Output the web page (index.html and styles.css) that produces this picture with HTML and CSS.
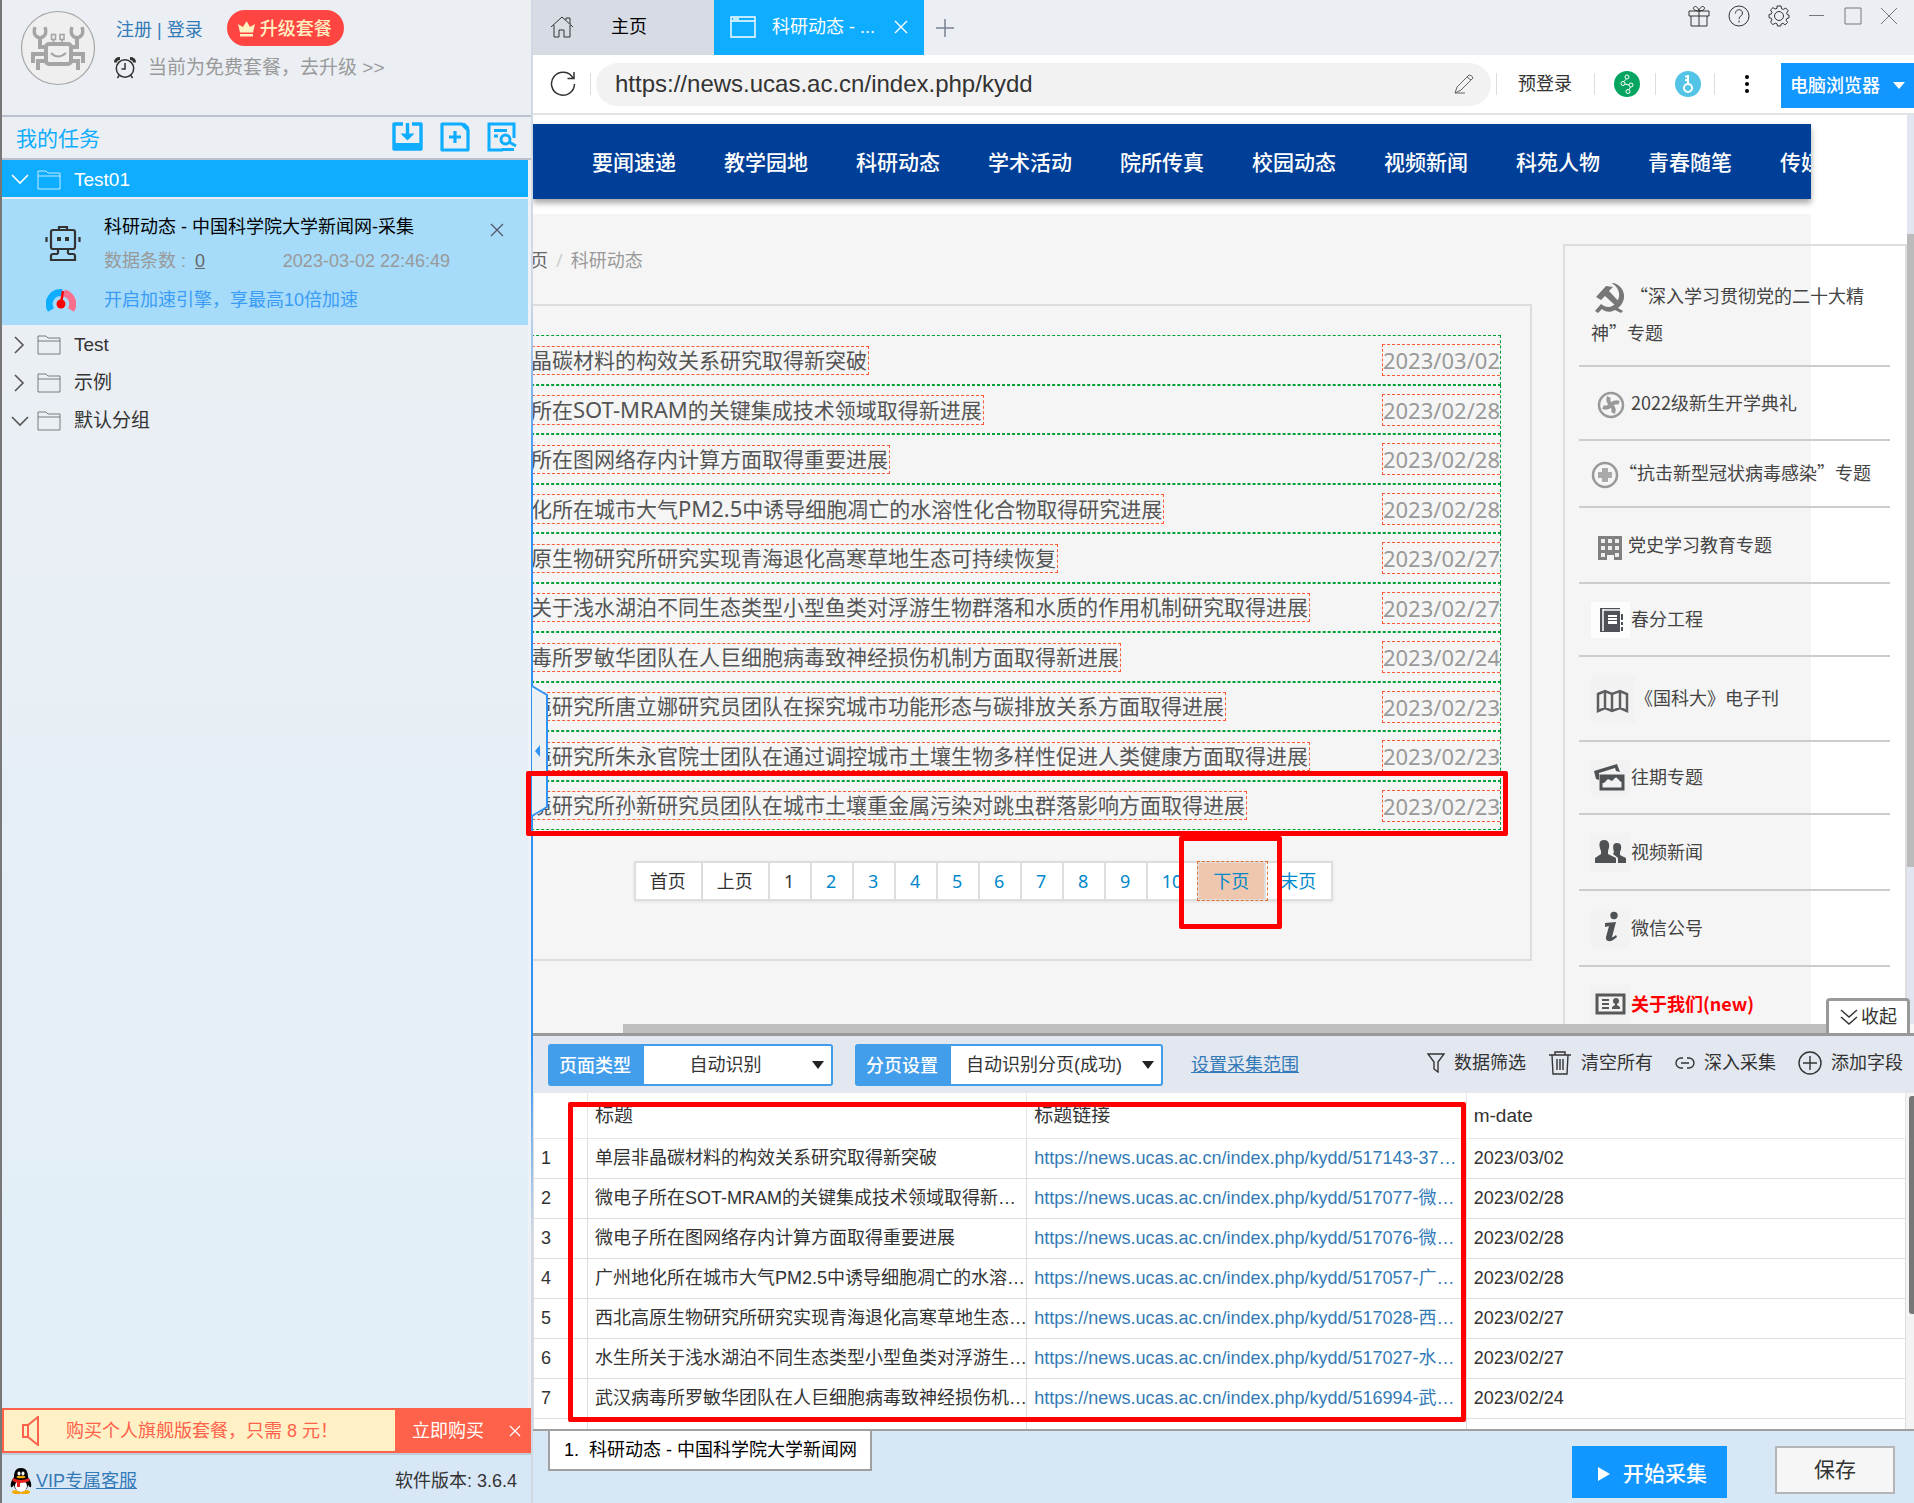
FILE: index.html
```html
<!DOCTYPE html>
<html lang="zh-CN">
<head>
<meta charset="utf-8">
<title>科研动态 - 中国科学院大学新闻网-采集</title>
<link rel="stylesheet" href="styles.css">
</head>
<body>
<div class="app">
  <aside class="sidebar">
    <header class="account">
      <svg class="avatar" viewBox="0 0 76 76" width="76" height="76" fill="none" stroke="#a5a5a5" stroke-width="4">
        <circle cx="38" cy="38" r="36.5" fill="#efefef" stroke-width="1.2"/>
        <rect x="26" y="34" width="25" height="20" rx="3"/>
        <path d="M31 43q7 7 15 0" stroke-width="2"/>
        <path d="M26 37h-6v-9M51 37h6v-9" />
        <path d="M15 17q-3 9 5 11q8-2 5-11M52 17q-3 9 5 11q8-2 5-11" stroke-width="3.4"/>
        <path d="M26 44H13v9M26 51h-8v9M51 44h12v9M51 51h7v9"/>
        <rect x="31.500" y="24.500" width="4" height="5" stroke-width="1.600"/><rect x="40" y="24.500" width="4" height="5" stroke-width="1.600"/><path d="M33.500 30v4M42 30v4" stroke-width="1.600"/>
      </svg>
      <div class="account-info">
        <div class="account-line">
          <span class="login"><a href="#">注册</a> | <a href="#">登录</a></span>
          <button class="upgrade" type="button">
            <svg width="19" height="16" viewBox="0 0 19 16" fill="#fff0c2"><path d="M9.500 0l3.500 6 5-3-2 8.500H3L1 3l5 3zM3 13h13v2.500H3z"/></svg>升级套餐</button>
        </div>
        <a class="plan" href="#">
          <svg width="22" height="24" viewBox="0 0 22 24" fill="none" stroke="#333" stroke-width="1.500"><circle cx="11" cy="12.500" r="8.700"/><path d="M11 7v6H7.500M5 19.500L3.500 22M17 19.500l1.500 2.500"/><path d="M1.500 6.500q0-4 4.500-4M20.500 6.500q0-4-4.500-4" stroke-width="3"/></svg>
          <span>当前为免费套餐，去升级 &gt;&gt;</span></a>
      </div>
    </header>
    <div class="tasks-head">
      <h2>我的任务</h2>
      <div class="task-tools">
        <button type="button" aria-label="导入任务"><svg width="31" height="30" viewBox="0 0 31 30" fill="none" stroke="#0fadff" stroke-width="3.400"><path d="M11 2H2v25h27V2h-9" stroke-linejoin="round"/><path d="M2 24.500h27" stroke-width="7"/><path d="M15.500 1v13"/><path d="M8.500 11.500h14l-7 7z" fill="#0fadff" stroke="none"/></svg></button>
        <button type="button" aria-label="新建任务"><svg width="30" height="30" viewBox="0 0 30 30" fill="none" stroke="#0fadff" stroke-width="3.200"><path d="M2 2h20l6 6v20H2z" stroke-linejoin="round"/><path d="M15 9v12M9 15h12"/><path d="M20 1l9 9V5l-4-4z" fill="#0fadff" stroke="none"/></svg></button>
        <button type="button" aria-label="查找任务"><svg width="30" height="30" viewBox="0 0 30 30" fill="none" stroke="#0fadff" stroke-width="3"><path d="M16 28H2V2h25v14"/><path d="M7 8.500h13M7 14h4"/><circle cx="18.500" cy="17.500" r="4.500"/><path d="M22 20l7 4M15 27.500h12"/></svg></button>
      </div>
    </div>
    <nav class="tree">
      <a class="folder active" href="#"><svg class="chev" width="18" height="11" viewBox="0 0 18 11"><path d="M1 1l8 8 8-8"/></svg><svg class="dir" width="24" height="20" viewBox="0 0 24 20"><path d="M1 19V1h8l2 2h12v16zM1 6h22"/></svg>Test01</a>
      <article class="task">
        <svg class="robot" width="36" height="38" viewBox="0 0 36 38" fill="none" stroke="#333" stroke-width="2.200"><rect x="6" y="5" width="24" height="19" rx="2"/><path d="M14 5V2h8v3M1.500 12v5M34.500 12v5M13 24v5M23 24v5M8 29h5M23 29h5"/><path d="M8 29q-2 0-2 2v4h24v-4q0-2-2-2"/><path d="M12 14h4M20 14h4" stroke-width="4"/></svg>
        <div class="task-name">科研动态 - 中国科学院大学新闻网-采集</div>
        <button class="task-close" type="button" aria-label="删除任务"><svg width="14" height="14" viewBox="0 0 14 14"><path d="M1 1l12 12M13 1L1 13"/></svg></button>
        <div class="task-meta"><span>数据条数 : <u>0</u></span><time>2023-03-02 22:46:49</time></div>
        <svg class="gauge" width="30" height="24" viewBox="0 0 30 24" fill="none" stroke-width="7"><path d="M5 22A11.500 11.500 0 0 1 16 4.500" stroke="#0fadff"/><path d="M18 4.800A11.500 11.500 0 0 1 25 22" stroke="#fb6f8e"/><circle cx="15" cy="16" r="4.500" fill="red" stroke="none"/><path d="M15 16L17 3" stroke="red" stroke-width="2.500"/></svg>
        <a class="boost" href="#">开启加速引擎，享最高10倍加速</a>
      </article>
      <a class="folder" href="#"><svg class="chev side" width="18" height="18" viewBox="0 0 18 18"><path d="M4 1l8 8-8 8"/></svg><svg class="dir" width="24" height="20" viewBox="0 0 24 20"><path d="M1 19V1h8l2 2h12v16zM1 6h22"/></svg>Test</a>
      <a class="folder" href="#"><svg class="chev side" width="18" height="18" viewBox="0 0 18 18"><path d="M4 1l8 8-8 8"/></svg><svg class="dir" width="24" height="20" viewBox="0 0 24 20"><path d="M1 19V1h8l2 2h12v16zM1 6h22"/></svg>示例</a>
      <a class="folder" href="#"><svg class="chev" width="18" height="11" viewBox="0 0 18 11"><path d="M1 1l8 8 8-8"/></svg><svg class="dir" width="24" height="20" viewBox="0 0 24 20"><path d="M1 19V1h8l2 2h12v16zM1 6h22"/></svg>默认分组</a>
    </nav>
    <div class="promo">
      <svg width="20" height="30" viewBox="0 0 20 30" fill="none" stroke="#ff624a" stroke-width="2"><path d="M1 9h5v12H1zM6 9l10-8v28L6 21"/></svg>
      <p>购买个人旗舰版套餐，只需 8 元！</p>
      <button class="buy" type="button">立即购买</button>
      <button class="promo-close" type="button" aria-label="关闭"><svg width="12" height="12" viewBox="0 0 12 12"><path d="M1 1l10 10M11 1L1 11"/></svg></button>
    </div>
    <footer class="side-foot">
      <svg width="22" height="26" viewBox="0 0 22 26"><ellipse cx="7" cy="24" rx="5" ry="2" fill="#f5a800"/><ellipse cx="15" cy="24" rx="5" ry="2" fill="#f5a800"/><path d="M11 0C5 0 4 5 4 9c-2 3-4 6-3 10 1 1 2-1 3-2 1 9 13 9 14 0 1 1 2 3 3 2 1-4-1-7-3-10 0-4-1-9-7-9z" fill="#000"/><ellipse cx="11" cy="18" rx="6" ry="6" fill="#fff"/><path d="M3 10q8 4 16 0l.5 3q-4 2-9.500 2v4H7v-4.500Q4 14 2.500 13z" fill="#e8221c"/><ellipse cx="9" cy="5.500" rx="1.500" ry="2" fill="#fff"/><ellipse cx="13" cy="5.500" rx="1.500" ry="2" fill="#fff"/><ellipse cx="11" cy="9" rx="4.500" ry="1.300" fill="#f5a800"/></svg>
      <a href="#">VIP专属客服</a>
      <span>软件版本: 3.6.4</span>
    </footer>
  </aside>

  <main class="main">
    <div class="tabbar">
      <button class="tab home" type="button"><svg width="24" height="24" viewBox="0 0 24 24"><path d="M1 12L12 2l11 10M4 10v12h5v-7h5v7h6V10M16 5V3h4v6"/></svg><span>主页</span></button>
      <button class="tab current" type="button"><svg width="26" height="22" viewBox="0 0 26 22"><path d="M1 1h24v20H1zM1 5h24M3 3h6"/></svg><span>科研动态 - ...</span><svg class="tab-x" width="14" height="14" viewBox="0 0 14 14"><path d="M1 1l12 12M13 1L1 13"/></svg></button>
      <button class="newtab" type="button" aria-label="新标签"><svg width="18" height="18" viewBox="0 0 18 18"><path d="M9 0v18M0 9h18"/></svg></button>
      <div class="winctl">
        <button type="button" aria-label="礼物"><svg width="22" height="22" viewBox="0 0 22 22"><path d="M1 6h20v5H1zM3 11v10h16V11M11 6v15M11 6C7 6 4 4 6 2s5 2 5 4c0-2 3-6 5-4s-1 4-5 4"/></svg></button>
        <button type="button" aria-label="帮助"><svg width="22" height="22" viewBox="0 0 22 22"><circle cx="11" cy="11" r="10"/><path d="M7.500 8.500c0-5 7-5 7-.5 0 3-3.500 3-3.500 6M11 15.500v2"/></svg></button>
        <button type="button" aria-label="设置"><svg width="22" height="22" viewBox="0 0 22 22"><circle cx="11" cy="11" r="4.500"/><path d="M9 1h4l.6 2.800 1.600.7L17.700 3l2.500 2.700-1.600 2.400.6 1.500L21 10v3l-2.200.5-.7 1.700 1.500 2.300-2.400 2.300-2.300-1.500-1.700.7L12.700 21H9.500L9 18.800l-1.700-.7L5 19.600l-2.500-2.400L4 15l-.7-1.700L1 12.700V9.500L3.300 9 4 7.300 2.500 5 5 2.600 7.200 4 9 3.300z"/></svg></button>
        <button type="button" aria-label="最小化"><svg width="18" height="22" viewBox="0 0 18 22"><path class="grey" d="M1 10.500h15"/></svg></button>
        <button type="button" aria-label="最大化"><svg width="18" height="22" viewBox="0 0 18 22"><path class="grey" d="M1 3h16v16H1z"/></svg></button>
        <button type="button" aria-label="关闭"><svg width="18" height="22" viewBox="0 0 18 22"><path class="grey" d="M1 3l16 16M17 3L1 19"/></svg></button>
      </div>
    </div>

    <div class="addressbar">
      <button class="reload" type="button" aria-label="刷新"><svg width="26" height="26" viewBox="0 0 26 26"><path d="M23 7A11.500 11.500 0 1 0 24.500 13M24 1v6.500h-6.500"/></svg></button>
      <i class="bar"></i>
      <label class="url"><input type="text" aria-label="网址" value="https://news.ucas.ac.cn/index.php/kydd"><svg width="20" height="20" viewBox="0 0 20 20"><path d="M1 19l2-6L15 1q3 0 4 3L7 16zM1 19h10M13 3l4 3"/></svg></label>
      <i class="bar"></i>
      <button class="prelogin" type="button">预登录</button>
      <i class="bar"></i>
      <button class="round" type="button" aria-label="代理"><svg width="26" height="26" viewBox="0 0 26 26" fill="none" stroke="#fff"><circle cx="13" cy="13" r="13" fill="#05a561" stroke="none"/><circle cx="13" cy="6" r="2"/><circle cx="9" cy="12.500" r="2"/><circle cx="17" cy="14" r="2"/><circle cx="14" cy="20.500" r="2"/><path d="M12.500 8L10 10.500M11 13l4 1M16.500 16L15 18.500"/></svg></button>
      <i class="bar"></i>
      <button class="round" type="button" aria-label="密码"><svg width="26" height="26" viewBox="0 0 26 26" fill="none" stroke="#fff" stroke-width="2"><circle cx="13" cy="13" r="13" fill="#54c4e6" stroke="none"/><circle cx="13" cy="17" r="4"/><path d="M13 13V4M10 5.500h3M10 9h3"/></svg></button>
      <i class="bar"></i>
      <button class="more" type="button" aria-label="更多"><svg width="6" height="20" viewBox="0 0 6 20"><circle cx="3" cy="3" r="2"/><circle cx="3" cy="10" r="2"/><circle cx="3" cy="17" r="2"/></svg></button>
      <button class="browser" type="button">电脑浏览器<svg width="12" height="7" viewBox="0 0 12 7"><path d="M0 0h12L6 7z"/></svg></button>
    </div>

    <div class="browserpane">
      <div class="viewport">
        <div class="site">
          <nav class="sitenav"><a href="#">要闻速递</a><a href="#">教学园地</a><a href="#">科研动态</a><a href="#">学术活动</a><a href="#">院所传真</a><a href="#">校园动态</a><a href="#">视频新闻</a><a href="#">科苑人物</a><a href="#">青春随笔</a><a href="#">传媒扫描</a></nav>
          <div class="sitebody">
            <div class="column">
              <div class="crumb"><a href="#">首页</a><i>/</i><span>科研动态</span></div>
              <section class="panel">
                <ul class="news">
                  <li><a href="#">单层非晶碳材料的构效关系研究取得新突破</a><time>2023/03/02</time></li>
                  <li><a href="#">微电子所在<span>SOT-MRAM</span>的关键集成技术领域取得新进展</a><time>2023/02/28</time></li>
                  <li><a href="#">微电子所在图网络存内计算方面取得重要进展</a><time>2023/02/28</time></li>
                  <li><a href="#">广州地化所在城市大气<span>PM2.5</span>中诱导细胞凋亡的水溶性化合物取得研究进展</a><time>2023/02/28</time></li>
                  <li><a href="#">西北高原生物研究所研究实现青海退化高寒草地生态可持续恢复</a><time>2023/02/27</time></li>
                  <li><a href="#">水生所关于浅水湖泊不同生态类型小型鱼类对浮游生物群落和水质的作用机制研究取得进展</a><time>2023/02/27</time></li>
                  <li><a href="#">武汉病毒所罗敏华团队在人巨细胞病毒致神经损伤机制方面取得新进展</a><time>2023/02/24</time></li>
                  <li><a href="#">城市环境研究所唐立娜研究员团队在探究城市功能形态与碳排放关系方面取得进展</a><time>2023/02/23</time></li>
                  <li><a href="#">城市环境研究所朱永官院士团队在通过调控城市土壤生物多样性促进人类健康方面取得进展</a><time>2023/02/23</time></li>
                  <li><a href="#">城市环境研究所孙新研究员团队在城市土壤重金属污染对跳虫群落影响方面取得进展</a><time>2023/02/23</time></li>
                </ul>
                <div class="pager"><span>首页</span><span>上页</span><span>1</span><a href="#">2</a><a href="#">3</a><a href="#">4</a><a href="#">5</a><a href="#">6</a><a href="#">7</a><a href="#">8</a><a href="#">9</a><a href="#">10</a><a class="next" href="#">下页</a><a href="#">末页</a></div>
              </section>
            </div>
            <aside class="topics">
              <ul>
                <li class="long"><svg width="39" height="30" viewBox="0 3 39 30" fill="#777"><path d="M5 17l10-11 7 1-4 4 12 13-4 3-12-11-4 4zM19 2c16 3 18 18 8 26l5 3-2 2-6-3c-5 3-10 2-13-1l-4 4-3-2 6-7c5 4 10 4 14 0 7-7 5-17-5-22z"/></svg>“深入学习贯彻党的二十大精神”专题</li>
                <li><svg width="40" height="37" viewBox="0 0 40 37" fill="none" stroke="#999"><circle cx="20" cy="20" r="12" stroke-width="2.500"/><path d="M20 20q-4-4-2-8M20 20q4-4 8-2M20 20q4 4 2 8M20 20q-4 4-8 2" stroke-width="4"/></svg><a href="#">2022级新生开学典礼</a></li>
                <li><svg width="28" height="30" viewBox="0 0 28 30"><circle cx="14" cy="16" r="12" fill="none" stroke="#999" stroke-width="2.500"/><path d="M11 9h6v4h4v6h-4v4h-6v-4H7v-6h4z" fill="#aaa"/></svg><a href="#">“抗击新型冠状病毒感染”专题</a></li>
                <li><svg width="37" height="39" viewBox="0 0 37 39"><path d="M7 10h24v24h-8v-5h-7v5H7z" fill="#808080"/><path d="M10 13h4v4h-4zM17 13h4v4h-4zM24 13h4v4h-4zM10 20h4v4h-4zM17 20h4v4h-4zM24 20h4v4h-4zM10 27h4v4h-4zM24 27h4v4h-4z" fill="#eee"/></svg><a href="#">党史学习教育专题</a></li>
                <li><svg width="40" height="36" viewBox="0 0 40 36"><path d="M0 0h39v36H0z" fill="#fdfdfd"/><path d="M9 6h20v24H9z" fill="#4e5158"/><path d="M12 7v22M12 8h17" stroke="#fff" stroke-width="1.500"/><path d="M17 13h9v9h-9z" fill="#fff"/><path d="M17 15.500h9M17 18.500h9" stroke="#4e5158"/><path d="M31 12v6M31 20v3M31 25v4" stroke="#4e5158" stroke-width="2"/></svg><a href="#">春分工程</a></li>
                <li><svg width="44" height="48" viewBox="0 0 44 48"><path d="M0 0h44v48H0z" fill="#f2f2f2"/><path d="M7 19l7-3 7 3 8-3 7 3v17l-7-3-8 3-7-3-7 3zM14 16v17M21 19v17M29 16v17" fill="none" stroke="#5c5e61" stroke-width="2.500"/></svg><a href="#">《国科大》电子刊</a></li>
                <li><svg width="40" height="36" viewBox="0 0 40 36"><path d="M0 0h39v36H0z" fill="#f2f2f2"/><path d="M3 11L26 4l3 8-4-1-1-3-16 5v7l-3-1z" fill="#4f5254"/><path d="M10 16h22v13H10z" fill="none" stroke="#4f5254" stroke-width="3"/><path d="M10 15v8l3 0 4-4 4 2 4-4 5 5 3-1v-6z" fill="#4f5254"/></svg><a href="#">往期专题</a></li>
                <li><svg width="40" height="39" viewBox="0 0 40 39"><path d="M0 0h39v39H0z" fill="#f2f2f2"/><path d="M13 7c6 0 6 6 4 11v3l8 4v5H4v-5l6-4v-3C8 13 7 7 13 7zM26 10c5 0 5 5 3 9v3l6 3v5h-8v-5l-5-4 1-2c-1-4-2-9 3-9z" fill="#4f5254"/></svg><a href="#">视频新闻</a></li>
                <li><svg width="40" height="39" viewBox="0 0 40 39"><path d="M0 0h39v39H0z" fill="#f2f2f2"/><circle cx="23" cy="6.500" r="3.700" fill="#4f5254"/><path d="M14 14l11-1-4 15q0 1 4-2l1 2c-6 6-12 5-11 0l3-11-4 1z" fill="#4f5254"/></svg><a href="#">微信公号</a></li>
                <li><svg width="40" height="39" viewBox="0 0 40 39"><path d="M0 0h39v39H0z" fill="#f2f2f2"/><path d="M6 10h27v18H6z" fill="none" stroke="#56585a" stroke-width="3"/><path d="M11 15h7M11 19h7M11 23h7" stroke="#56585a" stroke-width="2"/><circle cx="25" cy="16" r="3" fill="#56585a"/><path d="M24 17h2v3l3 2v2h-8v-2l3-2z" fill="#56585a"/></svg><a class="hot" href="#">关于我们(new)</a></li>
              </ul>
            </aside>
          </div>
        </div>
      </div>
      <div class="vscroll"><i></i></div>
      <div class="hscroll"><i></i></div>
      <button class="collapse" type="button"><svg width="18" height="16" viewBox="0 0 18 16"><path d="M1 1l8 7 8-7M1 8l8 7 8-7"/></svg>收起</button>
      <svg class="handle" width="18" height="132" viewBox="0 0 18 132"><path d="M1 1l15 9v112L1 131" fill="#ebf0f5" stroke="#2e93f5" stroke-width="2"/><path d="M4 66l5-6v12z" fill="#2e93f5"/></svg>
    </div>

    <div class="toolbar">
      <div class="picker"><label for="ptype">页面类型</label><select id="ptype"><option>自动识别</option></select></div>
      <div class="picker wide"><label for="paging">分页设置</label><select id="paging"><option>自动识别分页(成功)</option></select></div>
      <a class="range" href="#">设置采集范围</a>
      <div class="actions">
        <button type="button"><svg width="18" height="20" viewBox="0 0 18 20"><path d="M1 1h16l-6 8v10l-4-3V9z" stroke-width="1.600"/></svg>数据筛选</button>
        <button type="button"><svg width="24" height="24" viewBox="0 0 24 24"><path d="M1 4h22M7 4V1h10v3M4 4l1 19h14l1-19M9 8v11M12 8v11M15 8v11"/></svg>清空所有</button>
        <button type="button"><svg width="20" height="14" viewBox="0 0 20 14"><path d="M8 2H6a5 5 0 0 0 0 10h2M12 2h2a5 5 0 0 1 0 10h-2M6 7h8" stroke-width="2"/></svg>深入采集</button>
        <button type="button"><svg width="24" height="24" viewBox="0 0 24 24"><circle cx="12" cy="12" r="11"/><path d="M12 5v14M5 12h14"/></svg>添加字段</button>
      </div>
    </div>

    <div class="grid">
      <table>
        <colgroup><col class="c-num"><col><col><col></colgroup>
        <thead><tr><th></th><th>标题</th><th>标题链接</th><th>m-date</th></tr></thead>
        <tbody>
          <tr><td>1</td><td>单层非晶碳材料的构效关系研究取得新突破</td><td><a href="#">https://news.ucas.ac.cn/index.php/kydd/517143-37…</a></td><td>2023/03/02</td></tr>
          <tr><td>2</td><td>微电子所在SOT-MRAM的关键集成技术领域取得新…</td><td><a href="#">https://news.ucas.ac.cn/index.php/kydd/517077-微…</a></td><td>2023/02/28</td></tr>
          <tr><td>3</td><td>微电子所在图网络存内计算方面取得重要进展</td><td><a href="#">https://news.ucas.ac.cn/index.php/kydd/517076-微…</a></td><td>2023/02/28</td></tr>
          <tr><td>4</td><td>广州地化所在城市大气PM2.5中诱导细胞凋亡的水溶…</td><td><a href="#">https://news.ucas.ac.cn/index.php/kydd/517057-广…</a></td><td>2023/02/28</td></tr>
          <tr><td>5</td><td>西北高原生物研究所研究实现青海退化高寒草地生态…</td><td><a href="#">https://news.ucas.ac.cn/index.php/kydd/517028-西…</a></td><td>2023/02/27</td></tr>
          <tr><td>6</td><td>水生所关于浅水湖泊不同生态类型小型鱼类对浮游生…</td><td><a href="#">https://news.ucas.ac.cn/index.php/kydd/517027-水…</a></td><td>2023/02/27</td></tr>
          <tr><td>7</td><td>武汉病毒所罗敏华团队在人巨细胞病毒致神经损伤机…</td><td><a href="#">https://news.ucas.ac.cn/index.php/kydd/516994-武…</a></td><td>2023/02/24</td></tr>
          <tr><td></td><td></td><td></td><td></td></tr>
        </tbody>
      </table>
      <div class="gscroll"><i></i></div>
    </div>

    <footer class="runbar">
      <button class="step" type="button">1. &nbsp;科研动态 - 中国科学院大学新闻网</button>
      <button class="start" type="button"><svg width="12" height="14" viewBox="0 0 12 14"><path d="M0 0l12 7-12 7z"/></svg>开始采集</button>
      <button class="save" type="button">保存</button>
    </footer>
  </main>
  <div class="mark mark-row"></div>
  <div class="mark mark-next"></div>
  <div class="mark mark-table"></div>
</div>
</body>
</html>
```

FILE: styles.css
```css
* { box-sizing: border-box; }
body {
  margin: 0;
  font: 18px/24px "Liberation Sans", "Noto Sans CJK SC", sans-serif;
  color: #333;
}
a { color: inherit; text-decoration: none; }
h2, p, ul { margin: 0; padding: 0; font-weight: normal; }
ul { list-style: none; }
i { font-style: normal; }
button {
  font: inherit;
  color: inherit;
  border: 0;
  padding: 0;
  background: none;
  white-space: nowrap;
}
svg { display: block; flex: none; }

.app {
  display: flex;
  height: 100vh;
  position: relative;
  overflow: hidden;
  border-left: 2px solid #777;
}

/* left task list */
.sidebar {
  width: 531px;
  flex: none;
  display: flex;
  flex-direction: column;
  background: linear-gradient(#ebeff4 20%, #e0eef8);
  border-right: 2px solid;
  border-image: linear-gradient(#d0d8e4 20%, #2e93f5 32%, #2e93f5 70%, #d0d8e4 82%) 1;
}
.account {
  display: flex;
  height: 117px;
  gap: 16px;
  padding: 10px 18px;
  border-bottom: 2px solid #bac1cd;
  background: #ebeff4;
}
.account-line { display: flex; align-items: center; gap: 24px; padding-left: 4px; }
.login { color: #337ab7; padding-top: 3px; }
.upgrade {
  display: flex;
  align-items: center;
  gap: 4px;
  height: 36px;
  padding: 2px 12px 0 10px;
  border-radius: 18px;
  background: #ff4542;
  color: #fff0c2;
  font-weight: 500;
}
.plan {
  display: flex;
  align-items: center;
  gap: 12px;
  height: 40px;
  padding: 3px 0 0 2px;
  font-size: 19px;
  color: #999;
}
.tasks-head {
  display: flex;
  justify-content: space-between;
  align-items: center;
  height: 43px;
  padding: 2px 14px 0 14px;
  border-bottom: 2px solid #bac1cd;
}
.tasks-head h2 { font-size: 21px; color: #0fadff; }
.task-tools { display: flex; gap: 17px; padding-bottom: 3px; }
.tree { flex: 1; border-right: 3px solid #eef2f6; }
.folder {
  display: flex;
  align-items: center;
  height: 38px;
  padding: 2px 0 0 9px;
  font-size: 19px;
}
.folder.active { height: 37px; background: #0fadff; color: #fff; }
.folder path { fill: none; stroke: #555; }
.folder.active path { stroke: #fff; }
.folder .chev path { stroke-width: 1.6; }
.dir { margin: 0 13px 0 8px; }
.dir path { opacity: .75; }
.task {
  display: grid;
  grid-template-columns: 59px 1fr 20px;
  grid-template-rows: 34px 34px 44px;
  column-gap: 0;
  align-items: center;
  height: 126px;
  margin-top: 2px;
  padding: 11px 18px 0 43px;
  background: #a6dbf9;
}
.robot { grid-row: 1 / 3; }
.task-name { color: #000; white-space: nowrap; }
.task-close { padding-top: 6px; }
.task-close path { stroke: #556; stroke-width: 1.2; }
.task-meta {
  grid-column: 2;
  display: flex;
  justify-content: space-between;
  padding-right: 40px;
  color: #999;
}
.task-meta u { color: #666; margin-left: 4px; }
.gauge { grid-column: 1; margin-left: 1px; }
.boost { color: #3a9cf5; }
.promo {
  display: flex;
  align-items: center;
  height: 45px;
  border: 2px solid #ff624a;
  background: #fff0c5;
  padding-left: 18px;
  color: #ff624a;
}
.promo p { flex: 1; padding-left: 24px; }
.promo button { height: 45px; background: #ff624a; color: #fff; }
.buy { width: 106px; }
.promo-close { width: 28px; padding-left: 8px; }
.promo-close path { stroke: #fff; stroke-width: 1.2; }
.side-foot {
  display: flex;
  align-items: center;
  gap: 4px;
  height: 50px;
  border-top: 2px solid #bfccda;
  background: #d8e7f6;
  padding: 4px 14px 0 8px;
}
.side-foot a { color: #337ab7; text-decoration: underline; }
.side-foot span { margin-left: auto; }

/* window chrome */
.main { flex: 1; min-width: 0; display: flex; flex-direction: column; }
.tabbar { display: flex; height: 55px; background: #ebeff3; }
.tab { display: flex; align-items: center; padding-bottom: 2px; }
.tab path, .newtab path, .winctl path, .winctl circle { fill: none; stroke: #333; }
.tab.home { width: 181px; gap: 37px; padding-left: 17px; background: #d7dce4; color: #000; }
.tab.current { width: 210px; gap: 16px; padding-left: 16px; background: #0fadff; color: #fff; }
.tab.current path { stroke: #fff; stroke-width: 1.4; }
.tab-x { margin-left: 3px; }
.newtab { padding: 0 12px; }
.newtab path { stroke: #7a8290; stroke-width: 1.5; }
.winctl { display: flex; margin-left: auto; padding: 4px 16px 0 0; gap: 18px; height: 27px; }
.winctl .grey { stroke: #777; }

.addressbar {
  display: flex;
  align-items: center;
  height: 60px;
  border-bottom: 2px solid #e0e2e4;
  background: #fff;
}
.bar { width: 1px; height: 22px; background: #ddd; }
.reload { margin: 0 14px 0 17px; }
.reload path { fill: none; stroke: #333; stroke-width: 1.5; }
.url {
  flex: 1;
  display: flex;
  align-items: center;
  height: 43px;
  margin: 0 5px;
  padding: 0 17px 0 19px;
  border-radius: 22px;
  background: #f2f2f2;
}
.url input {
  flex: 1;
  font: 24px/30px "Liberation Sans", sans-serif;
  color: #333;
  border: 0;
  padding: 0;
  background: none;
}
.url path { fill: none; stroke: #666; }
.prelogin { padding: 0 22px 0 21px; }
.round { padding: 0 15px 0 19px; }
.round + .bar + .round { padding: 0 13px 0 19px; }
.more { padding: 0 31px 0 29px; }
.browser {
  display: flex;
  align-items: center;
  gap: 13px;
  height: 45px;
  margin-top: 3px;
  padding: 0 9px;
  background: #1296ff;
  color: #fff;
  font-weight: 500;
}
.browser path { fill: #fff; }

/* embedded web page */
.browserpane {
  flex: 1;
  min-height: 0;
  display: grid;
  grid-template-columns: minmax(0, 1fr) 7px;
  grid-template-rows: minmax(0, 1fr) 9px;
  position: relative;
  border-bottom: 3px solid #999;
}
.viewport { overflow: hidden; background: #fff; display: flex; }
.vscroll { background: #e0e5ef; padding-top: 119px; }
.vscroll i { display: block; height: 633px; background: #bbb; }
.hscroll { grid-column: 1 / 3; background: #f5f5f5; padding: 0 4px 0 90px; }
.hscroll i { display: block; height: 9px; background: #bfbfbf; }
.site {
  flex: 1;
  min-width: 0;
  display: flex;
  flex-direction: column;
  margin-right: 96px;
  padding-top: 9px;
  font-family: "Noto Sans", "Noto Sans CJK SC", sans-serif;
}
.sitenav {
  display: flex;
  align-items: center;
  gap: 48px;
  height: 75px;
  flex: none;
  padding: 1px 0 0 59px;
  background: #003f98;
  box-shadow: 0 4px 6px rgba(0, 0, 0, .35);
  overflow: hidden;
  color: #fff;
  font-size: 21px;
  font-weight: 500;
  white-space: nowrap;
}
.sitebody {
  flex: 1;
  display: flex;
  gap: 31px;
  margin-top: 15px;
  padding-top: 28px;
  background: #f5f5f5;
}
.column { flex: 1; min-width: 0; margin-left: -98px; }
.crumb { display: flex; gap: 7px; height: 36px; line-height: 36px; padding-left: 77px; margin-bottom: 26px; color: #666; }
.crumb i { color: #ccc; padding: 0 1px; }
.crumb span { color: #999; }
.panel { border: 2px solid #ddd; padding: 29px 29px 58px; }
.news { font-size: 21px; line-height: 27px; }
.news li {
  display: flex;
  align-items: center;
  justify-content: space-between;
  height: 49px;
  border: 1px dashed #00a038;
  white-space: nowrap;
}
.news li:nth-child(odd) { height: 50px; }
.news a { color: #555; border: 1px dashed #ff5a36; padding-right: 1px; }
.news a span { font-size: 22px; }
.news time {
  font-size: 22px;
  line-height: 30px;
  color: #999;
  border: 1px dashed #ff5a36;
  border-right: 0;
}
.pager {
  display: flex;
  width: max-content;
  margin: 31px auto 0;
  border: 2px solid #ddd;
  background: #fff;
  box-shadow: 0 1px 3px rgba(0, 0, 0, .08);
}
.pager > * {
  height: 36px;
  line-height: 36px;
  min-width: 42px;
  padding: 0 15px 0 14px;
  text-align: center;
  border-right: 2px solid #ddd;
}
.pager > :last-child { border-right: 0; }
.pager a { color: #0088cc; }
.pager .next { background: #efc6ae; outline: 1px dashed #e8702a; outline-offset: 1px; }

.topics {
  width: 344px;
  flex: none;
  align-self: stretch;
  margin: 2px -96px 0 0;
  padding: 13px 15px 0 14px;
  border: 2px solid #ddd;
  border-bottom: 0;
  font-family: "Noto Sans CJK SC", sans-serif;
  color: #444;
}
.topics li {
  display: flex;
  align-items: center;
  padding: 18px 12px 17px;
  border-bottom: 2px solid #ccc;
  white-space: nowrap;
}
.topics a { padding-bottom: 4px; }
.topics .long { display: block; white-space: normal; line-height: 37px; padding-bottom: 14px; }
.long svg { display: inline-block; vertical-align: middle; }
.topics .hot { color: #f00; font-weight: bold; }

.collapse {
  position: absolute;
  right: 4px;
  bottom: 0;
  display: flex;
  align-items: center;
  gap: 3px;
  height: 35px;
  padding: 0 10px 0 11px;
  border: 3px solid #999;
  border-bottom: 0;
  border-radius: 4px 4px 0 0;
  background: #fff;
}
.collapse path { fill: none; stroke: #333; stroke-width: 1.5; }
.handle { position: absolute; left: -2px; top: 570px; }

/* extraction settings */
.toolbar {
  display: flex;
  align-items: center;
  height: 57px;
  padding: 0 11px 0 15px;
  background: #e3e8f0;
}
.picker {
  display: flex;
  position: relative;
  width: 285px;
  height: 42px;
  margin-right: 22px;
  border: 2px solid #429eea;
  border-radius: 3px;
  background: #fff;
}
.picker.wide { width: 308px; margin-right: 28px; }
.picker label {
  width: 94px;
  line-height: 40px;
  padding-left: 9px;
  background: #429eea;
  color: #fff;
  font-weight: 500;
}
.picker select {
  flex: 1;
  appearance: none;
  border: 0;
  padding: 0 24px 0 0;
  background: none;
  font: inherit;
  color: #333;
  text-align-last: center;
}
.picker::after {
  content: "";
  position: absolute;
  right: 7px;
  top: 15px;
  border: 6px solid transparent;
  border-top: 8px solid #222;
  border-bottom: 0;
}
.range { color: #337ab7; text-decoration: underline; }
.actions { display: flex; gap: 22px; margin-left: auto; padding-bottom: 3px; }
.actions button { display: flex; align-items: center; gap: 9px; }
.actions path, .actions circle { fill: none; stroke: #333; stroke-width: 1.4; }

/* result rows */
.grid { display: flex; height: 336px; overflow: hidden; background: #fff; }
table { flex: 1; width: 100%; table-layout: fixed; border-collapse: collapse; }
.c-num { width: 54px; }
th, td {
  height: 40px;
  padding: 0 0 0 7px;
  border: 1px solid #ddd;
  text-align: left;
  white-space: nowrap;
  overflow: hidden;
}
th { height: 45px; padding-top: 2px; font-size: 19px; font-weight: normal; border-color: #e6e6e6; border-top: 0; }
td a { color: #337ab7; }
.gscroll { width: 8px; padding: 3px 0 0 3px; background: #f3f3f3; }
.gscroll i { display: block; height: 218px; border-radius: 3px 0 0 3px; background: #777; }

.runbar {
  display: flex;
  align-items: flex-start;
  height: 74px;
  padding: 0 19px 0 15px;
  border-top: 2px solid #a0a0a0;
  background: #d8e7f6;
}
.step {
  height: 40px;
  padding: 0 13px 0 14px;
  border: 2px solid #a0a0a0;
  border-top: 0;
  background: #fff;
  color: #000;
}
.start {
  display: flex;
  align-items: center;
  gap: 13px;
  height: 52px;
  margin: 15px 48px 0 auto;
  padding: 3px 20px 0 26px;
  background: #1296ff;
  color: #fff;
  font-size: 21px;
  font-weight: 500;
}
.start path { fill: #fff; }
.save {
  width: 120px;
  height: 48px;
  margin-top: 15px;
  border: 2px solid #b5b5b5;
  background: #f6f6f6;
  font-size: 21px;
}

/* highlight boxes drawn over the window */
.mark { position: absolute; border: 5px solid #f00; border-radius: 2px; pointer-events: none; }
.mark-row { left: 524px; top: 771px; width: 982px; height: 65px; }
.mark-next { left: 1177px; top: 836px; width: 103px; height: 93px; }
.mark-table { left: 566px; top: 1102px; width: 898px; height: 320px; }
```
